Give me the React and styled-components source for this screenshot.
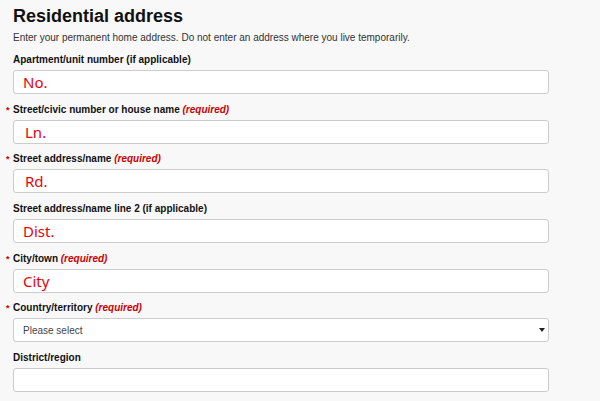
import React from "react";
import styled, { createGlobalStyle } from "styled-components";

const Global = createGlobalStyle`
  html, body { margin: 0; padding: 0; background: #f8f8f8; }
  body { font-family: "Liberation Sans", Arial, sans-serif; color: #222; }
`;

const Page = styled.div`
  padding: 4px 51px 0 13px;
  display: flex;
  flex-direction: column;
`;

const Title = styled.h2`
  margin: 0;
  font-size: 18px;
  font-weight: bold;
  line-height: 24px;
  color: #111;
`;

const Desc = styled.p`
  margin: 3px 0 0;
  font-size: 10px;
  line-height: 13px;
  color: #333;
`;

const Fields = styled.div`
  display: flex;
  flex-direction: column;
  gap: 9.7px;
  margin-top: 10px;
`;

const Field = styled.div`
  display: flex;
  flex-direction: column;
  gap: 4px;
`;

const Label = styled.label`
  font-size: 10px;
  font-weight: bold;
  line-height: 12px;
  color: #111;
`;

const Star = styled.span`
  color: #c00;
  margin-left: -7px;
  display: inline-block;
  width: 7px;
  font-size: 9px;
`;

const Req = styled.em`
  color: #c00;
  font-style: italic;
`;

const Box = styled.div`
  height: 22px;
  box-sizing: content-box;
  border: 1px solid #ccc;
  border-radius: 3px;
  background: #fff;
  display: flex;
  align-items: center;
  padding: 0 8px;
`;

const Value = styled.span`
  color: #e8000b;
  font-family: "Noto Sans", "Liberation Sans", sans-serif;
  font-size: 15px;
  line-height: 22px;
  padding-left: ${p => p.$indent || 0}px;
`;

const Placeholder = styled.span`
  color: #444;
  font-size: 10px;
  flex: 1;
  padding-left: 1px;
`;

const Arrow = styled.span`
  width: 0;
  height: 0;
  border-left: 3px solid transparent;
  border-right: 3px solid transparent;
  border-top: 4px solid #222;
  margin-right: -5px;
`;

const fields = [
  { label: "Apartment/unit number (if applicable)", value: "No.", indent: 1 },
  { label: "Street/civic number or house name", req: true, value: "Ln.", indent: 3 },
  { label: "Street address/name", req: true, value: "Rd.", indent: 3 },
  { label: "Street address/name line 2 (if applicable)", value: "Dist.", indent: 1 },
  { label: "City/town", req: true, value: "City", indent: 1 },
  { label: "Country/territory", req: true, select: true },
  { label: "District/region", value: "" },
];

export default function App() {
  return (
    <>
      <Global />
      <Page>
        <Title>Residential address</Title>
        <Desc>Enter your permanent home address. Do not enter an address where you live temporarily.</Desc>
        <Fields>
          {fields.map((f, i) => (
            <Field key={i}>
              <Label>
                {f.req && <Star>*</Star>}
                {f.label}
                {f.req && <> <Req>(required)</Req></>}
              </Label>
              <Box>
                {f.select ? (
                  <>
                    <Placeholder>Please select</Placeholder>
                    <Arrow />
                  </>
                ) : (
                  <Value $indent={f.indent}>{f.value}</Value>
                )}
              </Box>
            </Field>
          ))}
        </Fields>
      </Page>
    </>
  );
}
